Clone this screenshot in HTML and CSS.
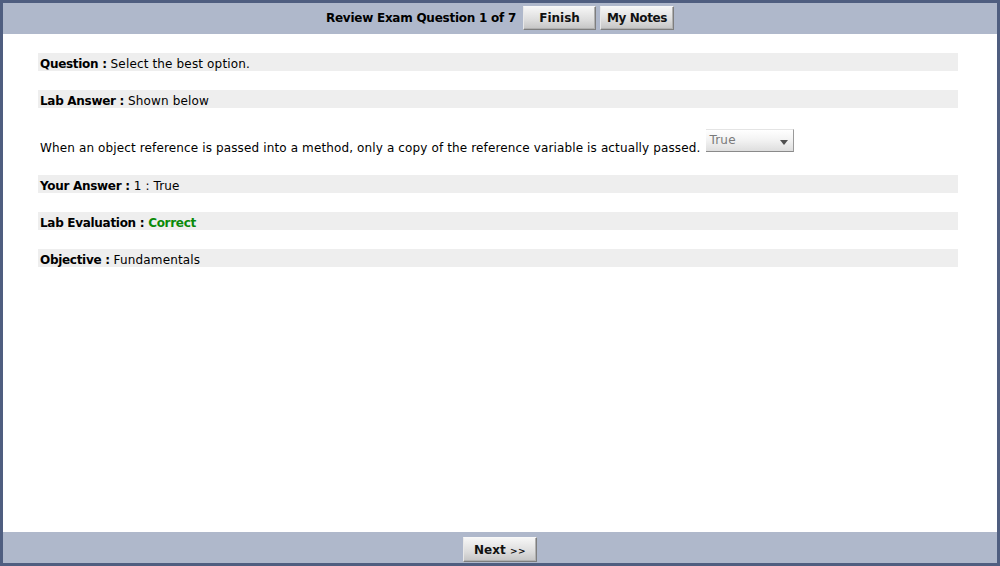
FILE: index.html
```html
<!DOCTYPE html>
<html>
<head>
<meta charset="utf-8">
<link rel="stylesheet" href="styles.css">
</head>
<body>
<div class="frame">
  <div class="bar top">
    <span class="title">Review Exam Question 1 of 7</span>
    <button class="btn finish">Finish</button>
    <button class="btn notes">My Notes</button>
  </div>
  <div class="content">
    <div class="row"><b>Question :</b> Select the best option.</div>
    <div class="row"><b>Lab Answer :</b> Shown below</div>
    <div class="sentence">
      <span class="stext">When an object reference is passed into a method, only a copy of the reference variable is actually passed.</span>
      <span class="select"><span class="sval">True</span><span class="arrow"></span></span>
    </div>
    <div class="row"><b>Your Answer :</b> 1 : True</div>
    <div class="row"><b>Lab Evaluation :</b> <b class="ok">Correct</b></div>
    <div class="row"><b>Objective :</b> Fundamentals</div>
  </div>
  <div class="bar bottom">
    <button class="btn next">Next <span class="gt">&gt;&gt;</span></button>
  </div>
</div>
</body>
</html>
```
FILE: styles.css
```css
html, body {
  margin: 0;
  padding: 0;
}
body {
  font-family: "DejaVu Sans", Verdana, sans-serif;
  font-size: 12px;
  color: #000;
}
b {
  letter-spacing: -0.3px;
}
.frame {
  width: 1000px;
  height: 566px;
  box-sizing: border-box;
  border: 3px solid #4f5e80;
  display: flex;
  flex-direction: column;
  background: #fff;
}
.bar {
  background: #afb8cb;
  height: 31px;
  display: flex;
  justify-content: center;
  align-items: flex-start;
  flex: none;
}
.bar.top {
  padding-top: 3px;
  box-sizing: border-box;
}
.bar.bottom {
  padding-top: 5px;
  box-sizing: border-box;
}
.title {
  font-weight: bold;
  font-size: 12px;
  line-height: 24px;
  margin-right: 7px;
  letter-spacing: -0.25px;
}
.btn {
  font-family: "DejaVu Sans", Verdana, sans-serif;
  font-weight: bold;
  font-size: 12px;
  height: 24px;
  padding: 0;
  background: linear-gradient(#f6f6f6, #dcdcdc 60%, #c4c4c4);
  border: 1px solid;
  border-color: #f8f8f8 #7e7e7e #7e7e7e #e8e8e8;
  color: #111;
  box-shadow: inset -1px -1px 0 #b0b0b0;
}
.finish { width: 73px; }
.notes { width: 74px; margin-left: 4px; letter-spacing: -0.4px; }
.next { width: 74px; height: 25px; }
.gt { font-size: 9px; letter-spacing: 0.5px; }
.content {
  flex: 1;
  padding: 19px 0 0 35px;
}
.row {
  width: 918px;
  height: 16px;
  padding-top: 2px;
  line-height: 18px;
  padding-left: 2px;
  background: #eeeeee;
  margin-bottom: 19px;
  white-space: nowrap;
  letter-spacing: 0.15px;
}
.ok { color: #0a8a0a; }
.sentence {
  display: flex;
  align-items: flex-end;
  height: 23px;
  margin: -19px 0 23px 0;
  padding-top: 21px;
  padding-left: 2px;
}
.stext {
  line-height: 14px;
  margin-bottom: -3px;
  letter-spacing: 0.13px;
}
.select {
  margin-left: 6px;
  width: 88px;
  height: 23px;
  box-sizing: border-box;
  background: linear-gradient(#ffffff, #f2f2f2 50%, #dedede);
  border-bottom: 1px solid #8a8a8a;
  border-right: 1px solid #9a9a9a;
  border-top: 1px solid #e4e4e4;
  position: relative;
  display: block;
}
.sval {
  position: absolute;
  left: 3px;
  top: 3px;
  color: #7a7a7a;
  font-size: 12px;
  line-height: 14px;
  letter-spacing: 0.2px;
}
.arrow {
  position: absolute;
  right: 5px;
  top: 10px;
  width: 0;
  height: 0;
  border-left: 4px solid transparent;
  border-right: 4px solid transparent;
  border-top: 5px solid #505050;
}
```
